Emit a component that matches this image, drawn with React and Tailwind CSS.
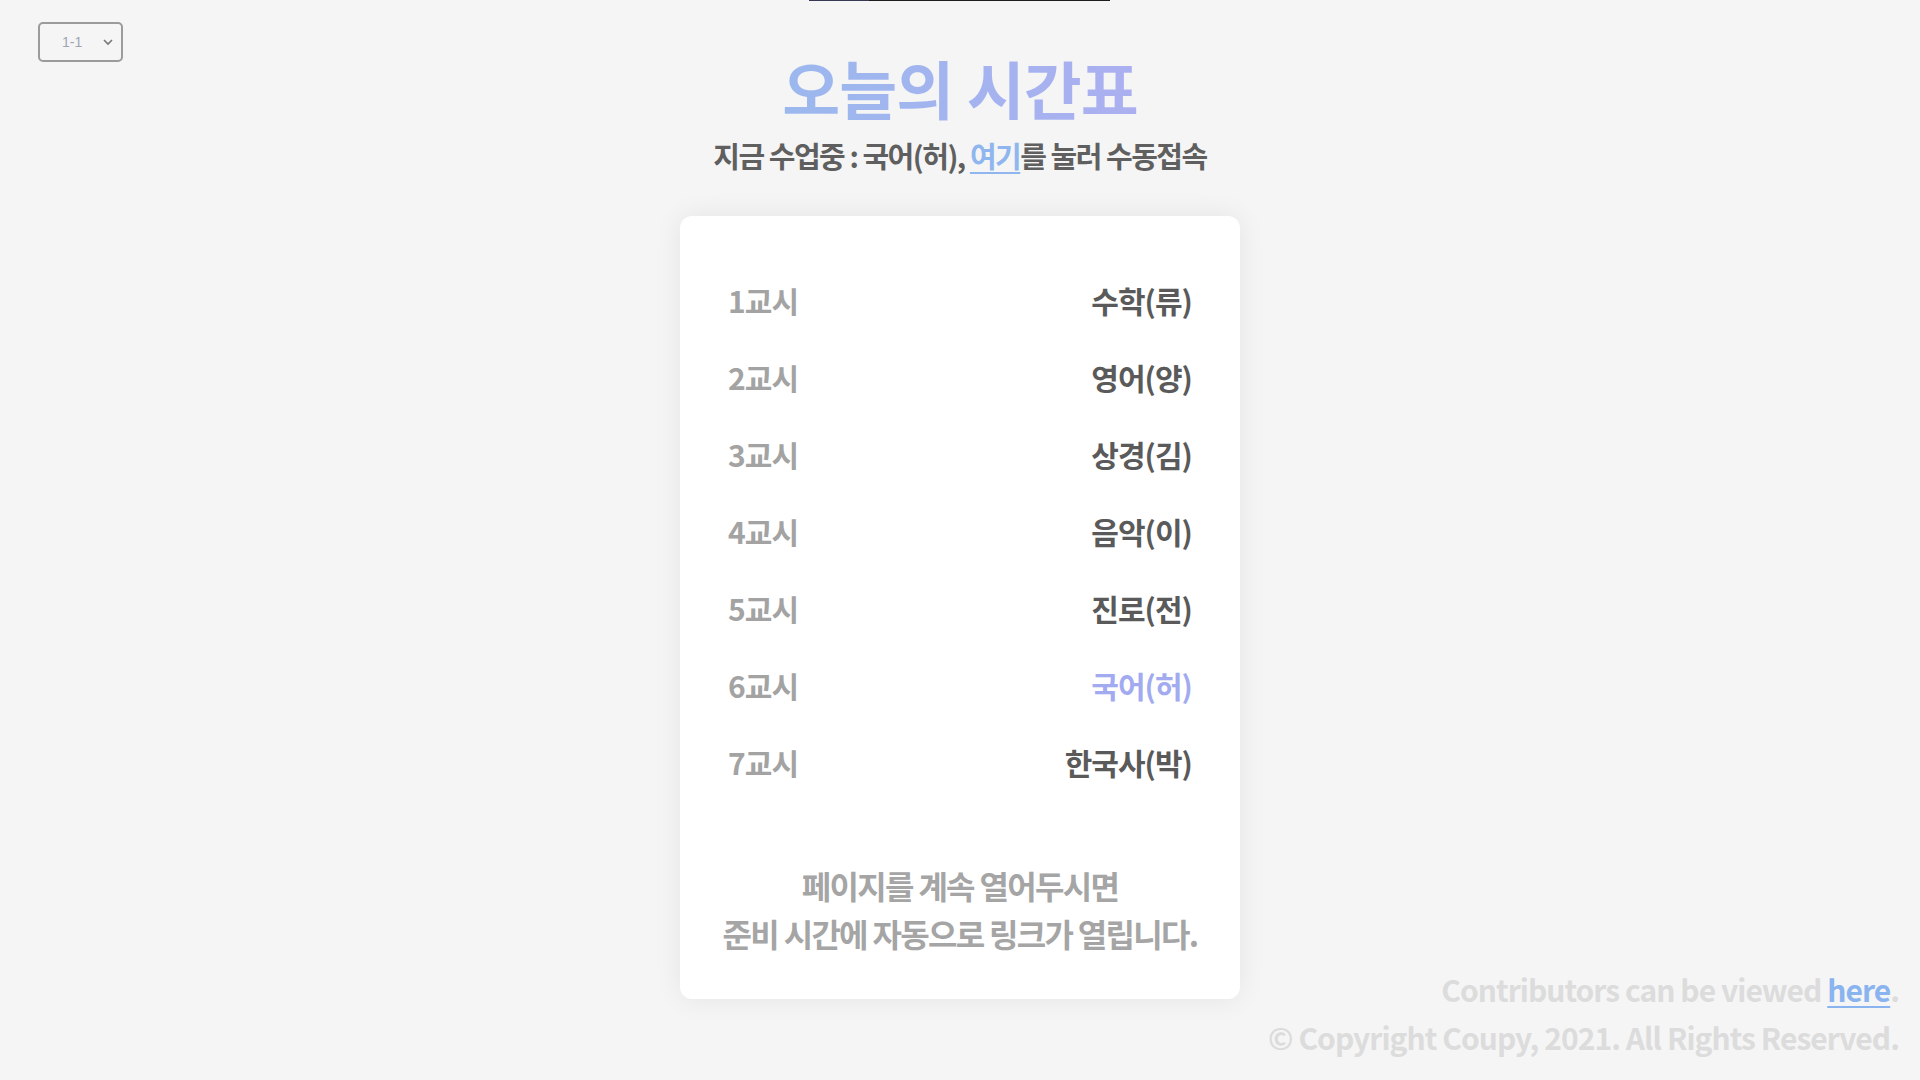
import React from 'react';

const periods = [
  { n: 1, subject: '수학(류)' },
  { n: 2, subject: '영어(양)' },
  { n: 3, subject: '상경(김)' },
  { n: 4, subject: '음악(이)' },
  { n: 5, subject: '진로(전)' },
  { n: 6, subject: '국어(허)', now: true },
  { n: 7, subject: '한국사(박)' },
];

export default function App() {
  return (
    <div className="relative min-h-screen bg-[#f5f5f5] font-['Noto_Sans_CJK_KR',sans-serif] font-bold tracking-[-0.06em]">
      {/* top progress line */}
      <div className="absolute left-[809px] top-0 flex h-px w-[301px]">
        <div className="w-[60px] bg-[#353a52]" />
        <div className="flex-1 bg-[#1c1c1c]" />
      </div>

      {/* class select */}
      <div className="absolute left-[38px] top-[22px]">
        <div className="relative h-[40px] w-[85px] rounded-[5px] border-2 border-[#9b9b9b]">
          <span className="absolute left-[22px] top-[8px] font-['Liberation_Sans',sans-serif] text-[14px] font-normal tracking-normal text-[#9da4b4]">
            1-1
          </span>
          <svg className="absolute right-[7px] top-[13px]" width="12" height="10" viewBox="0 0 12 10" fill="none">
            <path d="M2 3 L6 7 L10 3" stroke="#777" strokeWidth="1.6" />
          </svg>
        </div>
      </div>

      <div className="flex flex-col items-center">
        <h1 className="mt-[47px] bg-gradient-to-r from-[#9bb8ee] to-[#abaff0] bg-clip-text text-[63px] leading-[80px] text-transparent">
          오늘의 시간표
        </h1>
        <div className="mt-[8px] whitespace-nowrap text-[29px] leading-[40px] tracking-[-1.5px] text-[#5f5f5f]">
          지금 수업중 : 국어(허),{' '}
          <a className="text-[#8fb6ee] underline decoration-2 underline-offset-4">여기</a>를 눌러 수동접속
        </div>

        <div className="mt-[41px] w-[560px] rounded-[12px] bg-white px-[48px] pb-[42px] pt-[46px] shadow-[0_0_28px_rgba(0,0,0,0.07)]">
          {periods.map(p => (
            <div key={p.n} className="flex h-[77px] items-center justify-between text-[30px]">
              <span className="text-[#a3a3a3]">{p.n}교시</span>
              <span className={p.now ? 'text-[#a2abf0]' : 'text-[#5a5a5a]'}>{p.subject}</span>
            </div>
          ))}
          <div className="-mx-[12px] mt-[60px] whitespace-nowrap text-center text-[32px] leading-[48px] tracking-[-1.7px] text-[#a5a5a5]">
            페이지를 계속 열어두시면
            <br />
            준비 시간에 자동으로 링크가 열립니다.
          </div>
        </div>
      </div>

      <div className="absolute bottom-[19px] right-[21px] text-right text-[30px] leading-[48px] text-[#dcdcdc]">
        <div>
          Contributors can be viewed{' '}
          <a className="text-[#8ab4f0] underline decoration-2 underline-offset-4">here</a>.
        </div>
        <div>© Copyright Coupy, 2021. All Rights Reserved.</div>
      </div>
    </div>
  );
}
